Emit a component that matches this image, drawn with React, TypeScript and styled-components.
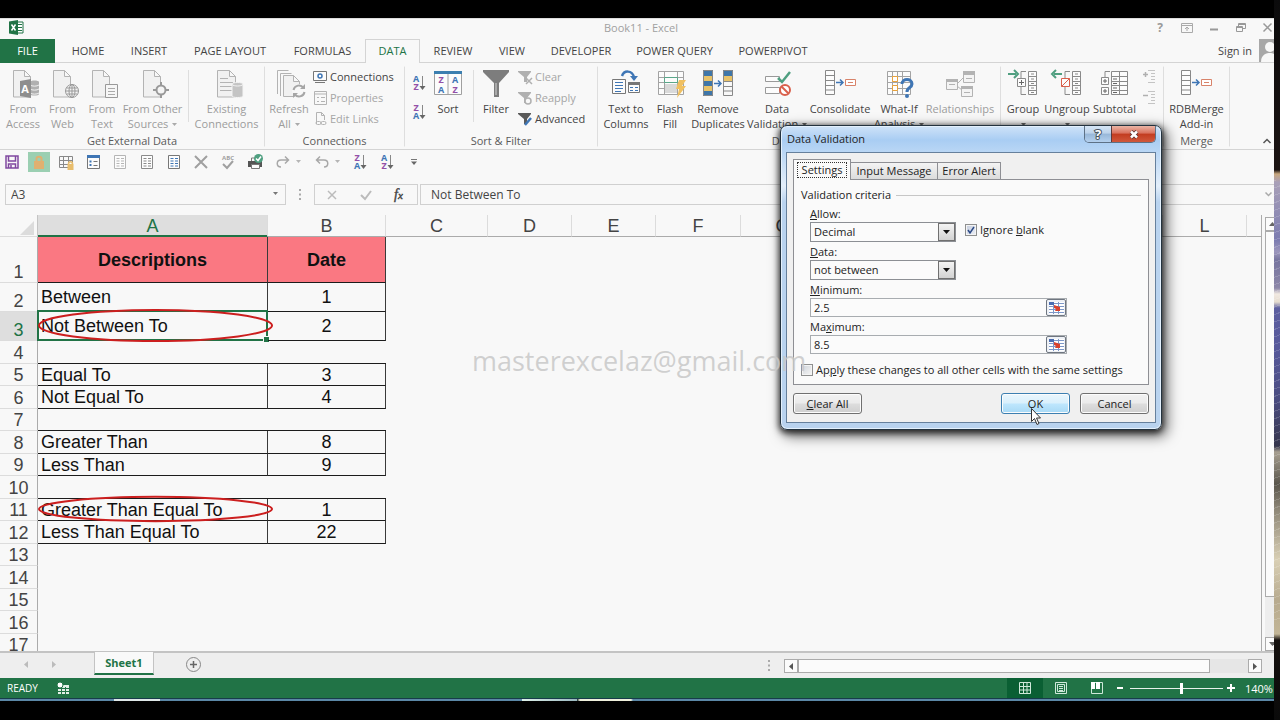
import React from "react";
import styled, { createGlobalStyle, css } from "styled-components";

const ui = `"Open Sans", "Noto Sans", sans-serif`;
const green = "#217346";
const line = "#d4d4d4";

const GlobalStyle = createGlobalStyle`
  *, *::before, *::after { box-sizing: border-box; }
  html, body, #root { height: 100%; }
  body { margin: 0; background: #000; overflow: hidden; font-family: ${ui}; }
  button, input, select { font: inherit; color: inherit; margin: 0; padding: 0; }
  button { border: 0; background: none; white-space: nowrap; }
  svg { display: block; overflow: visible; flex: none; }
`;

/* ---------- window shell ---------- */

const Screen = styled.div`
  display: flex;
  height: 100vh;
  background: #000;
`;

const Desktop = styled.div`
  flex: 1;
  min-width: 0;
  display: flex;
  flex-direction: column;
  padding: 18px 0 19px;
`;

const Wallpaper = styled.div`
  width: 6px;
  background:
    repeating-linear-gradient(160deg, rgba(255, 255, 255, 0.16) 0 1px, transparent 1px 7px) 0 180px / 6px 440px no-repeat,
    linear-gradient(
      #0b0b0c 0, #1c1413 170px, #c8a67c 174px, #a9a0b8 182px, #7b7bb0 240px,
      #9c96bc 252px, #77759f 260px, #8c86a8 288px, #f1e9e2 294px, #e5dccf 302px, #5d5fa0 308px,
      #56589a 350px, #4a4c80 400px, #35354c 446px, #a79f90 452px, #5a564c 484px, #8f8878 510px,
      #d9cfb4 560px, #b7aa8e 600px, #c2b596 634px, #15110f 640px, #0a0a0a 720px
    );
`;

const AppWindow = styled.div`
  position: relative;
  flex: 1;
  min-height: 0;
  display: flex;
  flex-direction: column;
  overflow: hidden;
  background: #f8f8f8;
  color: #444;
  border-top: 1px solid #dcdcdc;
`;

const TitleBar = styled.header`
  position: relative;
  display: flex;
  justify-content: space-between;
  align-items: flex-start;
  height: 20px;
`;

const TitleText = styled.div`
  padding-left: 8px;
  flex: 1;
  text-align: center;
  font-size: 11px;
  line-height: 18px;
  color: #a0a0a0;
`;

const TitleSide = styled.div<{ $end?: boolean }>`
  width: 120px;
  height: 17px;
  display: flex;
  align-items: center;
  justify-content: ${(p) => (p.$end ? "flex-end" : "flex-start")};
  padding-left: ${(p) => (p.$end ? 0 : 8)}px;
  color: #9a9a9a;
`;

const WindowButton = styled.button`
  width: 27px;
  height: 16px;
  flex: none;
  display: flex;
  align-items: center;
  justify-content: center;
  &:last-child { width: 20px; padding-left: 6px; }
`;

const TabBar = styled.nav`
  display: flex;
  height: 24px;
  border-bottom: 1px solid ${line};
`;

const RibbonTab = styled.button<{ $w: number; $kind?: "file" | "active" }>`
  width: ${(p) => p.$w}px;
  height: 24px;
  font-size: 11px;
  line-height: 24px;
  display: flex;
  justify-content: center;
  ${(p) =>
    p.$kind === "file" &&
    css`
      background: ${green};
      color: #fff;
      margin-right: 3px;
    `}
  ${(p) =>
    p.$kind === "active" &&
    css`
      color: ${green};
      background: #f8f8f8;
      border: 1px solid ${line};
      border-bottom: 0;
      line-height: 22px;
    `}
`;

const Account = styled.div`
  margin-left: auto;
  display: flex;
  gap: 7px;
  font-size: 11px;
  line-height: 24px;
  a { color: inherit; text-decoration: none; }
`;

const Avatar = styled.div`
  width: 15px;
  height: 23px;
  overflow: hidden;
  background: #a8a8a8;
`;

/* ---------- ribbon ---------- */

const Ribbon = styled.div`
  display: flex;
  height: 87px;
  border-bottom: 1px solid ${line};
`;

const Group = styled.section`
  display: flex;
  flex-direction: column;
  padding: 7px 0 0;
  border-right: 1px solid transparent;
  border-image: linear-gradient(#f8f8f8 4px, #dedede 5px, #dedede 82px, #f8f8f8 83px) 1;
`;

const GroupBody = styled.div<{ $l?: number; $r?: number }>`
  display: flex;
  height: 63px;
  padding-left: ${(p) => p.$l ?? 0}px;
  padding-right: ${(p) => p.$r ?? 0}px;
`;

const GroupLabel = styled.div`
  text-align: center;
  font-size: 11px;
  line-height: 17px;
  color: #5a5a5a;
  white-space: nowrap;
`;

const BigButton = styled.button<{ $w: number; $off?: boolean }>`
  width: ${(p) => p.$w}px;
  display: flex;
  flex-direction: column;
  align-items: center;
  font-size: 11px;
  line-height: 15px;
  color: ${(p) => (p.$off ? "#9c9c9c" : "#444")};
  svg { margin-bottom: 3px; }
`;

const ShortRule = styled.div<{ $gap: number }>`
  width: 1px;
  height: 52px;
  margin-left: ${(p) => p.$gap}px;
  background: #dedede;
`;

const SmallList = styled.div<{ $w: number }>`
  width: ${(p) => p.$w}px;
  display: flex;
  flex-direction: column;
  margin-top: -4px;
`;

const SmallButton = styled.button<{ $off?: boolean }>`
  display: flex;
  align-items: center;
  gap: 3px;
  height: 21px;
  font-size: 11px;
  color: ${(p) => (p.$off ? "#a6a6a6" : "#444")};
`;

const IconStack = styled.div<{ $w: number; $gap: number }>`
  width: ${(p) => p.$w}px;
  display: flex;
  flex-direction: column;
  align-items: center;
  gap: ${(p) => p.$gap}px;
`;

const Collapse = styled.button`
  margin: auto 0 3px auto;
  width: 12px;
  height: 10px;
`;

/* ---------- quick access + formula bar ---------- */

const QuickBar = styled.div`
  display: flex;
  align-items: center;
  gap: 5px;
  height: 24px;
  padding-left: 1px;
  margin-bottom: 10px;
`;

const QuickButton = styled.button<{ $w?: number; $on?: boolean }>`
  width: ${(p) => p.$w ?? 22}px;
  height: 20px;
  display: flex;
  align-items: center;
  justify-content: center;
  gap: 5px;
  background: ${(p) => (p.$on ? "#9bcfb2" : "none")};
`;

const FormulaBar = styled.div`
  display: flex;
  height: 21px;
  padding-left: 5px;
  margin-bottom: 10px;
  font-size: 12px;
`;

const Box = styled.div<{ $w?: number }>`
  ${(p) => (p.$w ? `width: ${p.$w}px;` : "flex: 1;")}
  border: 1px solid #d0d0d0;
  border-right-width: ${(p) => (p.$w ? 1 : 0)}px;
  display: flex;
  align-items: center;
  min-width: 0;
`;

const BoxInput = styled.input<{ $pad: number }>`
  flex: 1;
  min-width: 0;
  height: 19px;
  border: 0;
  outline: 0;
  background: none;
  && { padding-left: ${(p) => p.$pad}px; }
`;

const BoxButton = styled.button`
  flex: 1;
  display: flex;
  justify-content: center;
`;

const CaretButton = styled.button<{ $w: number }>`
  width: ${(p) => p.$w}px;
  display: flex;
  justify-content: center;
`;

const Dots = styled.div<{ $w: number }>`
  width: ${(p) => p.$w}px;
  display: flex;
  justify-content: center;
  align-items: center;
`;

/* ---------- sheet ---------- */

const SheetArea = styled.main`
  flex: 1;
  min-height: 0;
  display: flex;
`;

const GridPane = styled.div`
  flex: 1;
  min-width: 0;
  overflow: hidden;
  border-right: 1px solid #ababab;
`;

const Grid = styled.table`
  width: 100%;
  table-layout: fixed;
  border-collapse: separate;
  border-spacing: 0;
  font-family: "Liberation Sans", Arial, sans-serif;
  font-size: 18px;
  line-height: 20px;
  color: #111;
  th, td { padding: 0; }
`;

const ColHead = styled.th<{ $on?: boolean; $last?: boolean }>`
  height: 22px;
  font-weight: 400;
  color: ${(p) => (p.$on ? green : "#444")};
  background: ${(p) => (p.$on ? "#dedede" : "none")};
  border-bottom: 1px solid ${(p) => (p.$on ? green : "#ababab")};
  box-shadow: ${(p) => (p.$on ? `inset 0 -1px 0 ${green}` : "none")};
  border-right: ${(p) => (p.$last ? "0" : "1px solid #dcdcdc")};
`;

const Corner = styled.td`
  border-right: 1px solid #c4c4c4;
  border-bottom: 1px solid #dcdcdc;
  svg { margin: 4px 3px 0 auto; }
`;

const RowHead = styled.th<{ $on?: boolean }>`
  font-weight: 400;
  vertical-align: bottom;
  text-align: center;
  color: ${(p) => (p.$on ? green : "#444")};
  background: ${(p) => (p.$on ? "#dedede" : "none")};
  border-right: 1px solid #ababab;
  border-bottom: 1px solid #dcdcdc;
`;

const Cell = styled.td<{ $head?: boolean; $edge?: boolean; $mid?: boolean }>`
  position: relative;
  white-space: nowrap;
  vertical-align: middle;
  text-align: ${(p) => (p.$mid || p.$head ? "center" : "left")};
  font-weight: ${(p) => (p.$head ? 700 : 400)};
  background: ${(p) => (p.$head ? "#fa7882" : "none")};
  border-bottom: 1px solid #1c1c1c;
  border-right: ${(p) => (p.$edge ? "1px solid #3a3a3a" : "0")};
  && { padding-left: ${(p) => (p.$mid || p.$head ? 0 : 3)}px; }
`;

const Selection = styled.span`
  position: absolute;
  inset: -2px -1px -1px -1px;
  border: 2px solid ${green};
  &::after {
    content: "";
    position: absolute;
    right: -3px;
    bottom: -3px;
    width: 5px;
    height: 5px;
    background: ${green};
    box-shadow: 0 0 0 1px #f8f8f8;
  }
`;

const Ring = styled.svg`
  position: absolute;
  left: 0;
  top: -3px;
  width: calc(100% + 6px);
  height: calc(100% + 5px);
  z-index: 1;
`;

const VScroll = styled.div`
  width: 9px;
  margin: 2px 0 0 3px;
  display: flex;
  flex-direction: column;
  overflow: hidden;
  background: #ededed;
`;

const VArrow = styled.button`
  height: 14px;
  width: 15px;
  border: 1px solid #ababab;
  background: #fbfbfb;
  display: flex;
  align-items: center;
  justify-content: center;
`;

const VThumb = styled.div`
  width: 15px;
  flex: 0 1 366px;
  border: 1px solid #ababab;
  background: #fbfbfb;
  margin-bottom: auto;
`;

const SheetTabs = styled.div`
  display: flex;
  height: 27px;
  background: #eee;
  border-top: 2px solid #c3c3c3;
`;

const NavArrows = styled.div`
  width: 94px;
  display: flex;
  align-items: center;
  padding: 0 0 3px 24px;
  gap: 19px;
`;

const NavButton = styled.button`
  width: 8px;
`;

const SheetTab = styled.button`
  width: 60px;
  height: 23px;
  margin-top: -1px;
  background: #f9f9f9;
  border-left: 1px solid #c3c3c3;
  border-right: 1px solid #c3c3c3;
  border-bottom: 2px solid ${green};
  color: ${green};
  font-weight: 700;
  font-size: 11px;
  line-height: 21px;
`;

const AddSheet = styled.button`
  width: 78px;
  height: 22px;
  display: flex;
  align-items: center;
  justify-content: center;
`;

const HScroll = styled.div`
  margin: 6px 12px 0 8px;
  width: 478px;
  height: 14px;
  display: flex;
  background: #e6e6e6;
`;

const HArrow = styled.button`
  width: 14px;
  border: 1px solid #ababab;
  background: #fbfbfb;
  display: flex;
  align-items: center;
  justify-content: center;
`;

const HThumb = styled.div`
  width: 412px;
  margin-right: auto;
  border: 1px solid #ababab;
  background: #fbfbfb;
`;

const Spacer = styled.div`
  flex: 1;
`;

const StatusBar = styled.footer`
  display: flex;
  align-items: center;
  height: 20px;
  background: ${green};
  color: #fff;
  font-size: 10px;
  padding-left: 7px;
`;

const StatusText = styled.span`
  width: 50px;
`;

const ViewButton = styled.button<{ $on?: boolean }>`
  width: 36px;
  height: 20px;
  display: flex;
  align-items: center;
  justify-content: center;
  background: ${(p) => (p.$on ? "#0a5f33" : "none")};
`;

const Zoom = styled.div`
  width: 124px;
  display: flex;
  align-items: center;
  gap: 4px;
  padding-left: 2px;
`;

const ZoomButton = styled.button`
  width: 9px;
`;

const ZoomRange = styled.input`
  appearance: none;
  width: 93px;
  height: 12px;
  background: linear-gradient(#e6f0ea, #e6f0ea) center / 100% 1px no-repeat;
  &::-webkit-slider-thumb {
    appearance: none;
    width: 3px;
    height: 11px;
    background: #fff;
  }
`;

const ZoomValue = styled.span`
  width: 29px;
  font-size: 11px;
  white-space: nowrap;
`;

const Taskbar = styled.div`
  height: 3px;
  background:
    linear-gradient(90deg, transparent 114px, #dfe8e8 114px, #dfe8e8 160px, transparent 160px,
      transparent 522px, #dff2ea 522px, #9ab8c0 577px, #122 577px, #eef0dc 580px, #eef0dc 631px, transparent 633px)
      0 1px / 100% 2px no-repeat,
    linear-gradient(#173c4a 0, #173c4a 1px, #5b87a6 1px, #5b87a6 3px);
`;

/* ---------- dialog ---------- */

const Watermark = styled.div`
  position: absolute;
  left: 472px;
  top: 322px;
  font-size: 27px;
  line-height: 40px;
  color: rgba(200, 200, 200, 0.85);
  white-space: nowrap;
  pointer-events: none;
  z-index: 3;
`;

const Dialog = styled.section`
  position: absolute;
  left: 780px;
  top: 106px;
  width: 382px;
  z-index: 2;
  padding: 0 5px 6px;
  border: 1px solid #24333f;
  border-radius: 7px;
  background: linear-gradient(#cfe3f8 0, #a9cdf3 14px, #bcd8f5 28px, #e3eefa 60px, #b9d3ef 76px, #b9d3ef 100%);
  box-shadow: inset 0 0 0 1px #e4f1fd, 0 2px 6px 1px rgba(0, 0, 0, 0.75), 4px 5px 13px 2px rgba(0, 0, 0, 0.5);
  color: #222;
  font-size: 11px;
  line-height: 16px;
`;

const DialogTitle = styled.div`
  display: flex;
  justify-content: space-between;
  height: 26px;
  h2 {
    margin: 0;
    padding-left: 1px;
    font-size: 11px;
    font-weight: 400;
    line-height: 26px;
    color: #222;
  }
`;

const Caption = styled.div`
  display: flex;
  height: 17px;
  border: 1px solid #5d7186;
  border-top: 0;
  border-radius: 0 0 5px 5px;
  overflow: hidden;
`;

const CaptionButton = styled.button<{ $close?: boolean }>`
  width: ${(p) => (p.$close ? 44 : 26)}px;
  display: flex;
  align-items: center;
  justify-content: center;
  border-left: ${(p) => (p.$close ? "1px solid #5d3a3a" : "0")};
  background: ${(p) =>
    p.$close
      ? "linear-gradient(#eab5a6 0, #d9705c 45%, #c23c20 50%, #d0583c 100%)"
      : "linear-gradient(#d6e6f6 0, #bcd2ea 45%, #98b7d8 50%, #b4d0ee 100%)"};
`;

const DialogBody = styled.div`
  border: 1px solid #66809c;
  background: #f0f0f0;
  padding: 6px 6px 8px;
`;

const DialogTabs = styled.div`
  display: flex;
  align-items: flex-end;
  height: 21px;
  position: relative;
  margin-bottom: -1px;
`;

const DialogTab = styled.button<{ $w: number; $on?: boolean }>`
  width: ${(p) => p.$w}px;
  height: ${(p) => (p.$on ? 21 : 18)}px;
  display: flex;
  align-items: center;
  justify-content: center;
  border: 1px solid #8e8f94;
  border-left-width: ${(p) => (p.$on ? 1 : 0)}px;
  background: linear-gradient(#f4f4f4, #dcdcdc);
  ${(p) =>
    p.$on &&
    css`
      background: #fafafa;
      border-bottom: 0;
      padding: 2px 3px 3px;
      span {
        flex: 1;
        line-height: 14px;
        border: 1px dotted #333;
      }
    `}
`;

const DialogPanel = styled.div`
  border: 1px solid #8e8f94;
  background: #fafafa;
  padding: 7px 7px 6px;
`;

const Legend = styled.div`
  display: flex;
  align-items: center;
  gap: 5px;
  &::after {
    content: "";
    flex: 1;
    border-top: 1px solid #c6c6c6;
  }
`;

const Fields = styled.div`
  padding: 3px 0 8px 9px;
  display: flex;
  flex-direction: column;
  gap: 2px;
`;

const FieldLabel = styled.label`
  display: block;
`;

const FieldRow = styled.div`
  display: flex;
  gap: 9px;
`;

const SelectWrap = styled.div`
  display: grid;
  width: 146px;
  height: 20px;
  border: 1px solid #8c8f94;
  background: #fbfbfb;
  > * { grid-area: 1 / 1; }
  select {
    appearance: none;
    border: 0;
    outline: 0;
    background: none;
    padding: 0 18px 0 3px;
  }
`;

const DropMark = styled.span`
  justify-self: end;
  width: 17px;
  height: 18px;
  border: 1px solid #707070;
  background: linear-gradient(#f4f4f4, #d2d2d2);
  display: flex;
  align-items: center;
  justify-content: center;
  pointer-events: none;
`;

const RefBox = styled.div`
  display: flex;
  width: 257px;
  height: 19px;
  border: 1px solid #a8acb0;
  background: #fbfbfb;
  input {
    flex: 1;
    min-width: 0;
    border: 0;
    outline: 0;
    background: none;
    padding-left: 3px;
  }
`;

const RefButton = styled.button`
  width: 20px;
  border: 1px solid #6f7680;
  border-radius: 2px;
  background: #eef1f6;
  display: flex;
  align-items: center;
  justify-content: center;
`;

const Check = styled.label`
  display: flex;
  align-items: center;
  gap: 3px;
  height: 16px;
  white-space: nowrap;
  input {
    appearance: none;
    width: 12px;
    height: 12px;
    border: 1px solid #8e8f8f;
    background: linear-gradient(135deg, #cfd3d8, #f6f6f6);
    box-shadow: inset 0 0 0 1px #f4f4f4;
  }
  input:checked {
    background: linear-gradient(135deg, #c3cbdc, #eef1f8);
  }
`;

const CheckMark = styled.span`
  display: grid;
  > * { grid-area: 1 / 1; }
  svg { pointer-events: none; place-self: center; }
`;

const DialogActions = styled.div`
  display: flex;
  gap: 10px;
  margin-top: 8px;
  > :first-child { margin-right: auto; }
`;

const PushButton = styled.button<{ $hot?: boolean }>`
  width: 69px;
  height: 21px;
  line-height: 17px;
  border: 1px solid ${(p) => (p.$hot ? "#3c7fb1" : "#707070")};
  border-radius: 3px;
  box-shadow: inset 0 0 0 1px #fcfcfc;
  background: ${(p) =>
    p.$hot
      ? "linear-gradient(#eaf6fd 0, #d9f0fc 48%, #bee6fd 52%, #a7d9f5 100%)"
      : "linear-gradient(#f2f2f2 0, #ebebeb 48%, #dddddd 52%, #cfcfcf 100%)"};
`;

const Pointer = styled.svg`
  position: absolute;
  left: 1031px;
  top: 389px;
  width: 12px;
  height: 18px;
  z-index: 4;
`;

/* ---------- icons ---------- */

type Kids = { children?: React.ReactNode };

const Big = ({ children }: Kids) => (
  <svg width="34" height="28" viewBox="0 0 34 28" fill="none" stroke="#777" aria-hidden="true">
    {children}
  </svg>
);

const Sm = ({ w = 14, h = 14, children }: Kids & { w?: number; h?: number }) => (
  <svg width={w} height={h} viewBox={`0 0 ${w} ${h}`} fill="none" stroke="#777" aria-hidden="true">
    {children}
  </svg>
);

const Page = ({ x = 7, w = 17 }: { x?: number; w?: number }) => (
  <path
    d={`M${x + 0.5} .5h${w - 6}l6 6v20.500h-${w}zM${x + w - 5.5} .5v6h6`}
    stroke="#b3b3b3"
    fill="#f1f1f1"
  />
);

const Letter = ({ x, y, c, s = 9, children }: Kids & { x: number; y: number; c: string; s?: number }) => (
  <text x={x} y={y} fontSize={s} fontWeight="700" fontFamily={ui} fill={c} stroke="none" textAnchor="middle">
    {children}
  </text>
);

const blue = "#3f76b5";
const purple = "#9350a8";

const SortGlyph = ({ down }: { down?: boolean }) => (
  <Sm w={14} h={16}>
    <Letter x={4} y={7} c={down ? purple : blue}>{down ? "Z" : "A"}</Letter>
    <Letter x={4} y={15} c={down ? blue : purple}>{down ? "A" : "Z"}</Letter>
    <path d="M10.500 1v12" stroke="#888" />
    <path d="M7.500 11h6l-3 4z" fill="#666" stroke="none" />
  </Sm>
);

const CaretMark = styled.svg`
  && { display: inline-block; margin: 0 0 2px 1px; }
`;

const Caret = ({ c = "#777", w = 5 }: { c?: string; w?: number }) => (
  <CaretMark width={w} height="3" viewBox="0 0 5 3" aria-hidden="true">
    <path d="M0 0h5L2.500 3z" fill={c} />
  </CaretMark>
);

const IcAccess = () => (
  <Big>
    <Page />
    <path d="M24 12c0-2 9-2 9 0v12c0 2-9 2-9 0z" fill="#b0b0b0" stroke="none" />
    <path d="M24 15c2 1.500 7 1.500 9 0M24 19c2 1.500 7 1.500 9 0M24 23c2 1.500 7 1.500 9 0" stroke="#f1f1f1" />
    <path d="M14 11l11-2v19l-11-2z" fill="#8e8e8e" stroke="none" />
    <Letter x={19} y={23} c="#fff" s={11}>A</Letter>
  </Big>
);
const IcWeb = () => (
  <Big>
    <Page />
    <circle cx="26" cy="21" r="6.500" fill="#f4f4f4" stroke="#999" />
    <ellipse cx="26" cy="21" rx="3" ry="6.500" stroke="#999" />
    <path d="M19.500 21h13M20.500 18h11M20.500 24h11M26 14.500v13" stroke="#999" />
  </Big>
);
const IcText = () => (
  <Big>
    <Page />
    <path d="M20.500 14.500h12v13h-12z" fill="#f6f6f6" stroke="#999" />
    <path d="M23 18.500h7M23 21.500h7M23 24.500h7" stroke="#aaa" />
  </Big>
);
const IcOther = () => (
  <Big>
    <Page />
    <circle cx="25" cy="20" r="4.500" fill="#f4f4f4" stroke="#999" strokeWidth="2" />
    <path d="M25 12v4M25 24v4M17 20h4M29 20h4" stroke="#999" strokeWidth="2" />
  </Big>
);
const IcExisting = () => (
  <Big>
    <Page w={18} />
    <path d="M10 8.500h8M10 12.500h13M10 16.500h12M10 20.500h12" stroke="#b3b3b3" />
    <path d="M22 14c0-2 11-2 11 0v12c0 2-11 2-11 0z" fill="#c4c4c4" stroke="#f4f4f4" />
    <path d="M22 14.500c2 2 9 2 11 0" stroke="#f4f4f4" />
  </Big>
);
const IcRefresh = () => (
  <Big>
    <path d="M5.500 24V.5h11M8.500 26V3.500h11" stroke="#b3b3b3" />
    <path d="M11.500 5.500h10l6 6v15h-16zM21.500 5.500v6h6" stroke="#b3b3b3" fill="#f1f1f1" />
    <circle cx="27" cy="21" r="7" fill="#f8f8f8" stroke="none" />
    <path d="M21.500 20a5.500 5.500 0 0 1 10-2M32.500 22a5.500 5.500 0 0 1-10 2" stroke="#a6a6a6" strokeWidth="2" />
    <path d="M33 14v5h-5zM21 28v-5h5z" fill="#a6a6a6" stroke="none" />
  </Big>
);
const IcSort = () => (
  <Big>
    <path d="M3.500 1.500h27v23h-27z" fill="#fcfcfc" stroke="#a0a0a0" />
    <path d="M3 1h28v3H3z" fill="#3c7fb0" stroke="none" />
    <path d="M17 4v21" stroke="#a0a0a0" />
    <Letter x={10} y={13} c={purple}>Z</Letter>
    <Letter x={10} y={23} c={blue}>A</Letter>
    <Letter x={24} y={13} c={blue}>A</Letter>
    <Letter x={24} y={23} c={purple}>Z</Letter>
  </Big>
);
const IcFilter = () => (
  <Big>
    <path d="M4 0h26v2L20 13v14h-5V13L4 2z" fill="#7d7d7d" stroke="none" />
    <path d="M17 13v12" stroke="#d8d8d8" />
  </Big>
);
const IcColumns = () => (
  <Big>
    <path d="M3.500 9.500h13v14h-13z" fill="#fcfcfc" />
    <path d="M6 12.500h8M6 15.500h8M6 18.500h8M6 21.500h6" stroke={blue} />
    <path d="M19.500 12.500h11v10h-11z" fill="#fcfcfc" />
    <path d="M19 12h12v3H19z" fill="#777" stroke="none" />
    <path d="M21 17.500h3M26 17.500h3M21 20.500h3M26 20.500h3" stroke={blue} />
    <path d="M13 6c2-6 10-6 12 1" stroke={blue} strokeWidth="2.500" />
    <path d="M21 6h8l-4 5z" fill={blue} stroke="none" />
  </Big>
);
const IcFlash = () => (
  <Big>
    <path d="M5.500 1.500h25v23h-25zM5 7.500h25M5 12.500h25M5 18.500h25M11.500 1v24M24.500 1v24" fill="#fcfcfc" stroke="#a3a3a3" />
    <path d="M12 14h12v9H12z" fill="#d9d9d9" stroke="none" />
    <path d="M11.500 7.500h13v5h-13z" stroke="#5aa78a" />
    <path d="M26 10h7l-4 6h4L24 28l2-9h-3z" fill="#f0c060" stroke="none" />
  </Big>
);
const IcDupes = () => (
  <Big>
    <path d="M2 0h10v26H2zM22 0h10v6H22z" fill="#3f76a8" stroke="none" />
    <path d="M2 6h10v5H2zM2 16h10v5H2zM22 6h10v5H22z" fill="#e8c268" stroke="none" />
    <path d="M22.500 .5h9v25h-9zM22.500 11.500h9M22.500 16.500h9M22.500 21h9M2.500 .5h9v25h-9z" stroke="#888" />
    <path d="M13 13.500h6M17 10.500l3 3-3 3" stroke={blue} strokeWidth="1.500" />
  </Big>
);
const IcValid = () => (
  <Big>
    <path d="M5.500 6.500h14v5h-14zM5.500 17.500h14v6h-14z" fill="#fcfcfc" stroke="#999" />
    <path d="M18 8l4 4 8-10" stroke="#4f9f80" strokeWidth="2.500" />
    <circle cx="25" cy="20" r="5" fill="#fff" stroke="#d9604c" strokeWidth="2" />
    <path d="M21.500 16.500l7 7" stroke="#d9604c" strokeWidth="2" />
  </Big>
);
const IcConsolidate = () => (
  <Big>
    <path d="M2.500 .5h9v24h-9zM2.500 5.500h9M2.500 10.500h9M2.500 15.500h9M2.500 20h9" fill="#fcfcfc" stroke="#888" />
    <path d="M13 12.500h6M17 9.500l3 3-3 3" stroke={blue} strokeWidth="1.500" />
    <path d="M22.500 9.500h10v6h-10zM25 12.500h5" fill="#fff" stroke="#d8836a" />
  </Big>
);
const IcWhatIf = () => (
  <Big>
    <path d="M5.500 1.500h23v23h-23zM10.500 1v24M15.500 1v24M20.500 1v24M5 6.500h24M5 12.500h24M5 18.500h24" fill="#fcfcfc" stroke="#a3a3a3" />
    <path d="M10.500 6.500h5v5h-5zM10.500 15.500h5v5h-5z" fill="#fff" stroke="#e8a23c" />
    <path d="M20 14c0-6 10-6 10 0 0 4-5 3-5 8" stroke={blue} strokeWidth="3" />
    <circle cx="25" cy="26" r="2" fill={blue} stroke="none" />
  </Big>
);
const IcRelations = () => (
  <Big>
    <path d="M3.500 9.500h11v10h-11zM20.500 2.500h11v10h-11zM18.500 16.500h11v10h-11z" fill="#f4f4f4" stroke="#b3b3b3" />
    <path d="M3 9h12v3H3zM20 1h12v4H20zM18 16h12v3H18z" fill="#b3b3b3" stroke="none" />
    <path d="M14 14l6-6M14 16l5 4M6 14.500h6M23 8.500h6M21 22.500h6" stroke="#b3b3b3" />
  </Big>
);

const Rungs = ({ x }: { x: number }) => (
  <path
    d={`M${x}.5 1.500h8v23h-8zM${x} 6.500h8M${x} 11.500h8M${x} 15.500h8M${x} 20.500h8M${x + 3} 4h3M${x + 3} 9h3M${x + 3} 13.500h3M${x + 3} 18h3M${x + 3} 22.500h3`}
    fill="#fcfcfc"
    stroke="#8a8a8a"
  />
);
const IcGroup = () => (
  <Big>
    <Rungs x={22} />
    <path d="M20 1.500h-5v23h5" stroke="#8a8a8a" />
    <path d="M11.500 8.500h8v8h-8z" fill="#fcfcfc" stroke="#8a8a8a" />
    <path d="M13 12.500h5M15.500 10v5" stroke="#666" />
    <path d="M2 4h8M8 0l4 4-4 4" stroke="#4f9f80" strokeWidth="2" />
  </Big>
);
const IcUngroup = () => (
  <Big>
    <Rungs x={22} />
    <path d="M20 1.500h-5v23h5" stroke="#8a8a8a" />
    <path d="M11.500 8.500h8v8h-8zM11.500 16.500l8-8" fill="#fcfcfc" stroke="#d9604c" />
    <path d="M12 4H4M6 0L2 4l4 4" stroke="#4f9f80" strokeWidth="2" />
  </Big>
);
const IcSubtotal = () => (
  <Big>
    <path d="M13.500 1.500h16v23h-16zM13 6.500h16M13 11.500h16M13 15.500h16M13 20.500h16M21.500 1v24" fill="#fcfcfc" stroke="#8a8a8a" />
    <path d="M12 1.500H7V8" stroke="#8a8a8a" />
    <path d="M3.500 7.500h7v7h-7zM3.500 17.500h7v7h-7z" fill="#fcfcfc" stroke="#8a8a8a" />
    <path d="M5 11h4M7 9v4M5 21h4M7 19v4M15 9h4M15 13.500h4M15 18h4M15 22.500h4" stroke="#666" />
  </Big>
);
const IcMerge = () => (
  <Big>
    <path d="M1.500 .5h9v24h-9zM1.500 5.500h9M1.500 10.500h9M1.500 15.500h9M1.500 20h9" fill="#fcfcfc" stroke="#888" />
    <path d="M12 12.500h6M16 9.500l3 3-3 3" stroke={blue} strokeWidth="1.500" />
    <path d="M21.500 9.500h10v6h-10zM24 12.500h5" fill="#fff" stroke="#d8836a" />
  </Big>
);

const IcDetail = ({ minus }: { minus?: boolean }) => (
  <Sm w={14} h={13}>
    <path d={minus ? "M1 4.500h5" : "M1 4.500h5M3.500 2v5"} stroke="#b0b0b0" strokeWidth="1.500" />
    <path d="M6 .5h7M9 3.500h4M9 6.500h4M9 9.500h4M6 12.500h7" stroke="#c4c4c4" />
  </Sm>
);

const Funnel = ({ c }: { c: string }) => <path d="M0 1h13v1L9 7v5H6V7L0 2z" fill={c} stroke="none" />;

/* ---------- data ---------- */

const tabs: [string, number, ("file" | "active")?][] = [
  ["FILE", 55, "file"],
  ["HOME", 60],
  ["INSERT", 62],
  ["PAGE LAYOUT", 100],
  ["FORMULAS", 85],
  ["DATA", 55, "active"],
  ["REVIEW", 66],
  ["VIEW", 52],
  ["DEVELOPER", 86],
  ["POWER QUERY", 101],
  ["POWERPIVOT", 96],
];

const columns: [string, number][] = [
  ["A", 230], ["B", 118], ["C", 102], ["D", 84], ["E", 84], ["F", 85],
  ["G", 84], ["H", 85], ["I", 84], ["J", 85], ["K", 84], ["L", 84],
];

const rows: { h: number; a?: string; b?: string; ring?: boolean }[] = [
  { h: 46, a: "Descriptions", b: "Date" },
  { h: 29, a: "Between", b: "1" },
  { h: 29, a: "Not Between To", b: "2", ring: true },
  { h: 23 },
  { h: 22, a: "Equal To", b: "3" },
  { h: 23, a: "Not Equal To", b: "4" },
  { h: 22 },
  { h: 23, a: "Greater Than", b: "8" },
  { h: 22, a: "Less Than", b: "9" },
  { h: 23 },
  { h: 22, a: "Greater Than Equal To", b: "1", ring: true },
  { h: 23, a: "Less Than Equal To", b: "22" },
  { h: 22 }, { h: 23 }, { h: 22 }, { h: 23 }, { h: 22 },
];

type BigItem = [string, string, number, () => React.ReactElement, boolean?, boolean?];

const BigItems = ({ items, off }: { items: BigItem[]; off?: boolean }) => (
  <>
    {items.map(([l1, l2, w, Icon, caret, dim]) => (
      <BigButton key={l1 + l2} $w={w} $off={off || dim}>
        <Icon />
        <span>{l1}</span>
        <span>
          {l2}
          {caret && <> <Caret c={off ? "#aaa" : "#666"} /></>}
        </span>
      </BigButton>
    ))}
  </>
);

/* ---------- parts ---------- */

const RibbonBar = () => (
  <Ribbon>
    <Group>
      <GroupBody $l={3}>
        <BigItems
          off
          items={[
            ["From", "Access", 40, IcAccess],
            ["From", "Web", 39, IcWeb],
            ["From", "Text", 40, IcText],
            ["From Other", "Sources", 61, IcOther, true],
          ]}
        />
        <ShortRule $gap={5} />
        <BigItems off items={[["Existing", "Connections", 75, IcExisting]]} />
      </GroupBody>
      <GroupLabel>Get External Data</GroupLabel>
    </Group>
    <Group>
      <GroupBody>
        <BigItems off items={[["Refresh", "All", 48, IcRefresh, true]]} />
        <SmallList $w={91}>
          <SmallButton>
            <Sm>
              <path d="M.5 1.500h13v9h-13z" fill="#fcfcfc" />
              <circle cx="7" cy="6" r="2" stroke={blue} strokeWidth="1.500" />
              <path d="M2 12.500h10" />
            </Sm>
            Connections
          </SmallButton>
          <SmallButton $off>
            <Sm>
              <path d="M1.500 .5h12v13h-12zM1 3h13M4 6.500h2M8 6.500h4M4 10.500h2M8 10.500h4" stroke="#b3b3b3" />
            </Sm>
            Properties
          </SmallButton>
          <SmallButton $off>
            <Sm>
              <path d="M3.500 12V.5h5l3 3V8M8.500 .5v3h3" stroke="#b3b3b3" />
              <rect x="3" y="9.500" width="5" height="3" rx="1.500" stroke="#b3b3b3" />
              <rect x="8" y="9.500" width="5" height="3" rx="1.500" stroke="#b3b3b3" />
            </Sm>
            Edit Links
          </SmallButton>
        </SmallList>
      </GroupBody>
      <GroupLabel>Connections</GroupLabel>
    </Group>
    <Group>
      <GroupBody>
        <IconStack $w={28} $gap={13}>
          <button aria-label="Sort A to Z"><svg width="0" height="5" /><SortGlyph /></button>
          <button aria-label="Sort Z to A"><SortGlyph down /></button>
        </IconStack>
        <BigItems items={[["Sort", "", 30, IcSort]]} />
        <ShortRule $gap={10} />
        <BigItems items={[["Filter", "", 44, IcFilter]]} />
        <SmallList $w={79}>
          <SmallButton $off>
            <Sm>
              <Funnel c="#b0b0b0" />
              <path d="M8 8l6 6M14 8l-6 6" stroke="#b0b0b0" strokeWidth="1.500" />
            </Sm>
            Clear
          </SmallButton>
          <SmallButton $off>
            <Sm>
              <Funnel c="#b0b0b0" />
              <circle cx="10" cy="10" r="3" fill="#f8f8f8" stroke="#b0b0b0" strokeWidth="1.500" />
            </Sm>
            Reapply
          </SmallButton>
          <SmallButton>
            <Sm>
              <Funnel c="#5a5a5a" />
              <path d="M7 13l6-7" stroke={blue} strokeWidth="2.500" />
            </Sm>
            Advanced
          </SmallButton>
        </SmallList>
      </GroupBody>
      <GroupLabel>Sort &amp; Filter</GroupLabel>
    </Group>
    <Group>
      <GroupBody $r={2}>
        <BigItems
          items={[
            ["Text to", "Columns", 56, IcColumns],
            ["Flash", "Fill", 32, IcFlash],
            ["Remove", "Duplicates", 64, IcDupes],
            ["Data", "Validation", 54, IcValid, true],
            ["Consolidate", "", 72, IcConsolidate],
            ["What-If", "Analysis", 46, IcWhatIf, true],
            ["Relationships", "", 76, IcRelations, false, true],
          ]}
        />
      </GroupBody>
      <GroupLabel>Data Tools</GroupLabel>
    </Group>
    <Group>
      <GroupBody $r={5}>
        <BigItems
          items={[
            ["Group", "", 44, IcGroup, true],
            ["Ungroup", "", 44, IcUngroup, true],
            ["Subtotal", "", 51, IcSubtotal],
          ]}
        />
        <IconStack $w={18} $gap={8}>
          <button aria-label="Show Detail"><IcDetail /></button>
          <button aria-label="Hide Detail"><IcDetail minus /></button>
        </IconStack>
      </GroupBody>
      <GroupLabel>Outline</GroupLabel>
    </Group>
    <Group>
      <GroupBody>
        <BigItems items={[["RDBMerge", "Add-in", 65, IcMerge]]} />
      </GroupBody>
      <GroupLabel>Merge</GroupLabel>
    </Group>
    <Collapse aria-label="Collapse the Ribbon">
      <Sm w={10} h={8}>
        <path d="M1.500 6L5 2.500 8.500 6" stroke="#555" strokeWidth="1.500" />
      </Sm>
    </Collapse>
  </Ribbon>
);

const SheetIcon = ({ c, fill }: { c: string; fill?: string }) => (
  <Sm>
    <path d="M1.500 .5h11v13h-11z" fill="#fcfcfc" stroke={c} />
    <path d="M3.500 3.500h3M3.500 6h3M3.500 8.500h3M3.500 11h3M8 3.500h3M8 6h3M8 8.500h3M8 11h3" stroke={fill ?? c} />
  </Sm>
);

const QuickAccess = () => (
  <QuickBar>
    <QuickButton aria-label="Save">
      <Sm>
        <path d="M1 1h12v12H1z" stroke="#8048a0" strokeWidth="1.500" />
        <path d="M3.500 1v5h7V1M3.500 13V9h7v4M6 10v3" stroke="#8048a0" strokeWidth="1.500" />
      </Sm>
    </QuickButton>
    <QuickButton $on aria-label="Lock Cell">
      <Sm>
        <path d="M2 6h10v8H2z" fill="#e0b070" stroke="none" />
        <path d="M4.500 6V3.500c0-2.500 5-2.500 5 0V6" stroke="#e0b070" strokeWidth="2" />
      </Sm>
    </QuickButton>
    <QuickButton aria-label="Protect Sheet">
      <Sm w={15} h={15}>
        <path d="M.5 1.500h13v11H.5zM4.500 1v12M9.500 1v12M0 5.500h14M0 9.500h14" stroke="#888" />
        <path d="M8.500 9h6v6h-6z" fill="#e8bd6c" stroke="none" />
        <path d="M9.500 9c0-3 4-3 4 0" stroke="#e8bd6c" strokeWidth="1.500" />
      </Sm>
    </QuickButton>
    <QuickButton aria-label="Form">
      <Sm>
        <path d="M1.500 .5h12v13h-12z" fill="#fcfcfc" stroke="#777" />
        <path d="M1 0h13v3H1z" fill={blue} stroke="none" />
        <path d="M3.500 6.500h2M3.500 10h2" stroke={blue} strokeWidth="2" />
        <path d="M7.500 6.500h4M7.500 10.500h4" />
      </Sm>
    </QuickButton>
    <QuickButton aria-label="Ungroup sheet"><SheetIcon c="#b5b5b5" /></QuickButton>
    <QuickButton aria-label="Group sheet"><SheetIcon c="#8a8a8a" /></QuickButton>
    <QuickButton aria-label="Freeze"><SheetIcon c="#777" fill={blue} /></QuickButton>
    <QuickButton aria-label="Delete">
      <Sm><path d="M1 1l12 12M13 1L1 13" stroke="#a0a0a0" strokeWidth="2" /></Sm>
    </QuickButton>
    <QuickButton aria-label="Spelling">
      <Sm w={14} h={16}>
        <Letter x={7} y={6} c="#a0a0a0" s={6}>ABC</Letter>
        <path d="M2 10l4 4 6-7" stroke="#a0a0a0" strokeWidth="2" />
      </Sm>
    </QuickButton>
    <QuickButton aria-label="Quick Print">
      <Sm w={17} h={16}>
        <path d="M1 7h14v6H1z" fill="#555" stroke="none" />
        <path d="M4.500 10.500h8v4h-8zM4.500 7V4h3" fill="#fcfcfc" stroke="#777" />
        <circle cx="11.500" cy="4.500" r="4.500" fill="#4f9f80" stroke="none" />
        <path d="M9 4.500l2 2 3-4" stroke="#fff" strokeWidth="1.500" />
      </Sm>
    </QuickButton>
    <QuickButton $w={34} aria-label="Redo">
      <Sm w={14} h={12}>
        <path d="M12 4H5c-5 0-5 7 0 7M9 .5L12.500 4 9 7.500" stroke="#a8a8a8" strokeWidth="1.500" />
      </Sm>
      <Caret c="#b5b5b5" />
    </QuickButton>
    <QuickButton $w={34} aria-label="Undo">
      <Sm w={14} h={12}>
        <path d="M2 4h7c5 0 5 7 0 7M5 .5L1.500 4 5 7.500" stroke="#a8a8a8" strokeWidth="1.500" />
      </Sm>
      <Caret c="#b5b5b5" />
    </QuickButton>
    <QuickButton aria-label="Sort Descending"><SortGlyph down /></QuickButton>
    <QuickButton aria-label="Sort Ascending"><SortGlyph /></QuickButton>
    <QuickButton aria-label="Customize">
      <Sm w={6} h={6}>
        <path d="M0 .5h6" />
        <path d="M0 2.500h6L3 6z" fill="#666" stroke="none" />
      </Sm>
    </QuickButton>
  </QuickBar>
);

const dotsIcon = (
  <Sm w={2} h={12}>
    <path d="M0 1h2M0 5.500h2M0 10h2" stroke="#aaa" strokeWidth="2" />
  </Sm>
);

const Formula = () => (
  <FormulaBar>
    <Box $w={281}>
      <BoxInput $pad={5} aria-label="Name Box" defaultValue="A3" />
      <CaretButton $w={20} aria-label="Names"><Caret w={7} /></CaretButton>
    </Box>
    <Dots $w={28}>{dotsIcon}</Dots>
    <Box $w={104}>
      <BoxButton aria-label="Cancel entry">
        <Sm w={10} h={10}><path d="M1 1l8 8M9 1L1 9" stroke="#bbb" strokeWidth="1.500" /></Sm>
      </BoxButton>
      <BoxButton aria-label="Enter">
        <Sm w={12} h={10}><path d="M1 5l4 4 6-8" stroke="#bbb" strokeWidth="2" /></Sm>
      </BoxButton>
      <BoxButton aria-label="Insert Function">
        <Sm w={12} h={14}>
          <text x="0" y="11" fontSize="14" fontStyle="italic" fontFamily="Liberation Serif, serif" fill="#444" stroke="#444" strokeWidth=".4">
            f<tspan fontSize="11">x</tspan>
          </text>
        </Sm>
      </BoxButton>
    </Box>
    <Dots $w={2} />
    <Box>
      <BoxInput $pad={10} aria-label="Formula" defaultValue="Not Between To" />
      <CaretButton $w={12} aria-label="Expand Formula Bar">
        <Sm w={7} h={5}><path d="M.5 .5l3 3 3-3" stroke="#aaa" strokeWidth="1.500" /></Sm>
      </CaretButton>
    </Box>
  </FormulaBar>
);

const Sheet = () => (
  <SheetArea>
    <GridPane>
      <Grid>
        <colgroup>
          <col width={38} />
          {columns.map(([c, w]) => <col key={c} width={w} />)}
          <col />
        </colgroup>
        <thead>
          <tr>
            <Corner>
              <Sm w={14} h={14}><path d="M14 0v14H0z" fill="#dcdcdc" stroke="none" /></Sm>
            </Corner>
            {columns.map(([c]) => <ColHead key={c} scope="col" $on={c === "A"}>{c}</ColHead>)}
            <ColHead as="td" $last />
          </tr>
        </thead>
        <tbody>
          {rows.map((r, i) => (
            <tr key={i} style={{ height: r.h }}>
              <RowHead scope="row" $on={i === 2}>{i + 1}</RowHead>
              {i < 12 ? (
                <>
                  <Cell $head={i === 0} $edge={!!r.a}>
                    {r.a}
                    {i === 2 && <Selection />}
                    {r.ring && (
                      <Ring viewBox="0 0 236 32" preserveAspectRatio="none" aria-hidden="true">
                        <ellipse cx="118" cy="16" rx="117" ry="15" fill="none" stroke="#cc1f1f" strokeWidth="2" vectorEffect="non-scaling-stroke" />
                      </Ring>
                    )}
                  </Cell>
                  <Cell $head={i === 0} $mid $edge={!!r.a}>{r.b}</Cell>
                </>
              ) : (
                <td colSpan={2} />
              )}
              <td colSpan={11} />
            </tr>
          ))}
        </tbody>
      </Grid>
    </GridPane>
    <VScroll>
      <VArrow aria-label="Scroll up"><Sm w={7} h={4}><path d="M0 4h7L3.500 0z" fill="#666" stroke="none" /></Sm></VArrow>
      <VThumb />
      <VArrow aria-label="Scroll down"><Sm w={7} h={4}><path d="M0 0h7L3.500 4z" fill="#666" stroke="none" /></Sm></VArrow>
    </VScroll>
  </SheetArea>
);

const RefGlyph = () => (
  <Sm w={15} h={12}>
    <path d="M0 0h15v12H0z" fill="#fff" stroke="none" />
    <path d="M0 1.500h15M0 4.500h15M0 7.500h15M0 10.500h15M4.500 0v12M9.500 0v12" stroke="#7d97c8" />
    <path d="M0 0h5v3H0z" fill="#4a6cb0" stroke="none" />
    <path d="M5 3l3 1 3 1v4H6l1-2-2-1z" fill="#d8402c" stroke="none" />
  </Sm>
);

const DropArrow = () => (
  <DropMark>
    <Sm w={7} h={4}><path d="M0 0h7L3.500 4z" fill="#111" stroke="none" /></Sm>
  </DropMark>
);

const ValidationDialog = () => (
  <Dialog role="dialog" aria-labelledby="dlg-title">
    <DialogTitle>
      <h2 id="dlg-title">Data Validation</h2>
      <Caption>
        <CaptionButton aria-label="Help">
          <Sm w={10} h={13}>
            <text x="5" y="11" fontSize="13" fontWeight="700" fontFamily={ui} textAnchor="middle" fill="#fff" stroke="#4a5560" strokeWidth="2" paintOrder="stroke">?</text>
          </Sm>
        </CaptionButton>
        <CaptionButton $close aria-label="Close">
          <Sm w={10} h={9}>
            <path d="M2 1.500l6 6M8 1.500l-6 6" stroke="#5a3030" strokeWidth="4" />
            <path d="M2 1.500l6 6M8 1.500l-6 6" stroke="#fff" strokeWidth="2.500" />
          </Sm>
        </CaptionButton>
      </Caption>
    </DialogTitle>
    <DialogBody>
      <DialogTabs role="tablist">
        <DialogTab role="tab" $w={58} $on><span>Settings</span></DialogTab>
        <DialogTab role="tab" $w={87}>Input Message</DialogTab>
        <DialogTab role="tab" $w={63}>Error Alert</DialogTab>
      </DialogTabs>
      <DialogPanel>
        <Legend>Validation criteria</Legend>
        <Fields>
          <div>
            <FieldLabel htmlFor="allow"><u>A</u>llow:</FieldLabel>
            <FieldRow>
              <SelectWrap>
                <select id="allow" defaultValue="Decimal"><option>Decimal</option></select>
                <DropArrow />
              </SelectWrap>
              <Check>
                <CheckMark>
                  <input type="checkbox" defaultChecked />
                  <Sm w={8} h={8}><path d="M1 4l2 3 4-6" stroke="#2c4a86" strokeWidth="1.500" /></Sm>
                </CheckMark>
                <span>Ignore <u>b</u>lank</span>
              </Check>
            </FieldRow>
          </div>
          <div>
            <FieldLabel htmlFor="data"><u>D</u>ata:</FieldLabel>
            <SelectWrap>
              <select id="data" defaultValue="not between"><option>not between</option></select>
              <DropArrow />
            </SelectWrap>
          </div>
          <div>
            <FieldLabel htmlFor="min"><u>M</u>inimum:</FieldLabel>
            <RefBox>
              <input id="min" defaultValue="2.5" />
              <RefButton aria-label="Pick minimum"><RefGlyph /></RefButton>
            </RefBox>
          </div>
          <div>
            <FieldLabel htmlFor="max">Ma<u>x</u>imum:</FieldLabel>
            <RefBox>
              <input id="max" defaultValue="8.5" />
              <RefButton aria-label="Pick maximum"><RefGlyph /></RefButton>
            </RefBox>
          </div>
        </Fields>
        <Check>
          <input type="checkbox" />
          <span>Ap<u>p</u>ly these changes to all other cells with the same settings</span>
        </Check>
      </DialogPanel>
      <DialogActions>
        <PushButton><u>C</u>lear All</PushButton>
        <PushButton $hot>OK</PushButton>
        <PushButton>Cancel</PushButton>
      </DialogActions>
    </DialogBody>
  </Dialog>
);

export default function App() {
  return (
    <Screen>
      <GlobalStyle />
      <Desktop>
        <AppWindow>
          <TitleBar>
            <TitleSide>
              <Sm w={16} h={15}>
                <path d="M8 2h7v11H8z" fill="#fff" stroke={green} />
                <path d="M10 4.500h4M10 7.500h4M10 10.500h4" stroke={green} />
                <path d="M1 1.500L10 0v15l-9-1.500z" fill={green} stroke="none" />
                <path d="M3.500 4.500l4 6M7.500 4.500l-4 6" stroke="#fff" strokeWidth="1.500" />
              </Sm>
            </TitleSide>
            <TitleText>Book11 - Excel</TitleText>
            <TitleSide $end>
              <WindowButton aria-label="Help">
                <Sm w={8} h={12}><Letter x={4} y={10} c="#9a9a9a" s={12}>?</Letter></Sm>
              </WindowButton>
              <WindowButton aria-label="Ribbon Display Options">
                <Sm w={12} h={10}><path d="M.5 .5h11v9H.5zM0 2.500h12M6 8V4.500M4 6l2-2 2 2" stroke="#aaa" /></Sm>
              </WindowButton>
              <WindowButton aria-label="Minimize">
                <Sm w={8} h={10}><path d="M0 6.500h8" stroke="#999" strokeWidth="2" /></Sm>
              </WindowButton>
              <WindowButton aria-label="Restore">
                <Sm w={10} h={9}><path d="M.5 3.500h6v5h-6zM2.500 3V.5h7v5H7M0 4.500h7M2 1.500h8" stroke="#999" /></Sm>
              </WindowButton>
              <WindowButton aria-label="Close">
                <Sm w={9} h={9}><path d="M.5 .5l8 8M8.500 .5l-8 8" stroke="#999" strokeWidth="1.500" /></Sm>
              </WindowButton>
            </TitleSide>
          </TitleBar>
          <TabBar>
            {tabs.map(([t, w, kind]) => <RibbonTab key={t} $w={w} $kind={kind}>{t}</RibbonTab>)}
            <Account>
              <a href="#signin">Sign in</a>
              <Avatar>
                <Sm w={15} h={23}>
                  <circle cx="11" cy="8" r="5" fill="#f8f8f8" stroke="none" />
                  <path d="M2 23c0-8 6-9 9-9s6 1 9 9z" fill="#f8f8f8" stroke="none" />
                </Sm>
              </Avatar>
            </Account>
          </TabBar>
          <RibbonBar />
          <QuickAccess />
          <Formula />
          <Sheet />
          <SheetTabs>
            <NavArrows>
              <NavButton aria-label="Previous sheet"><Sm w={5} h={7}><path d="M4 0v7L0 3.500z" fill="#bbb" stroke="none" /></Sm></NavButton>
              <NavButton aria-label="Next sheet"><Sm w={5} h={7}><path d="M1 0v7l4-3.500z" fill="#bbb" stroke="none" /></Sm></NavButton>
            </NavArrows>
            <SheetTab>Sheet1</SheetTab>
            <AddSheet aria-label="New sheet">
              <Sm w={15} h={15}>
                <circle cx="7.500" cy="7.500" r="7" stroke="#888" />
                <path d="M7.500 4v7M4 7.500h7" stroke="#666" strokeWidth="1.500" />
              </Sm>
            </AddSheet>
            <Spacer />
            <Dots $w={14}>{dotsIcon}</Dots>
            <HScroll>
              <HArrow aria-label="Scroll left"><Sm w={4} h={7}><path d="M4 0v7L0 3.500z" fill="#555" stroke="none" /></Sm></HArrow>
              <HThumb />
              <HArrow aria-label="Scroll right"><Sm w={4} h={7}><path d="M0 0v7l4-3.500z" fill="#555" stroke="none" /></Sm></HArrow>
            </HScroll>
          </SheetTabs>
          <StatusBar>
            <StatusText>READY</StatusText>
            <button aria-label="Record Macro">
              <Sm w={12} h={12}>
                <path d="M1 3h11v9H1z" fill="#e2efe7" stroke="none" />
                <path d="M1 6.500h11M1 9.500h11M4.500 5v7M8.500 5v7" stroke={green} />
                <circle cx="3" cy="3" r="3" fill="#fff" stroke={green} />
              </Sm>
            </button>
            <Spacer />
            <ViewButton $on aria-label="Normal">
              <Sm w={12} h={12}><path d="M.5 .5h11v11H.5zM4.500 0v12M8 0v12M0 4.500h12M0 8h12" stroke="#cfe8da" /></Sm>
            </ViewButton>
            <ViewButton aria-label="Page Layout">
              <Sm w={12} h={12}><path d="M.5 .5h11v11H.5zM2.500 2.500h7v7h-7zM4 4.500h4M4 6.500h4M4 8.500h4" stroke="#cfe8da" /></Sm>
            </ViewButton>
            <ViewButton aria-label="Page Break Preview">
              <Sm w={12} h={12}>
                <path d="M.5 .5h11v11H.5z" stroke="#cfe8da" />
                <path d="M0 0h4v7H0zM5 0h4v7H5z" fill="#fff" stroke="none" />
              </Sm>
            </ViewButton>
            <Zoom>
              <ZoomButton aria-label="Zoom out"><Sm w={6} h={6}><path d="M0 3h6" stroke="#fff" strokeWidth="2" /></Sm></ZoomButton>
              <ZoomRange type="range" min={10} max={272} defaultValue={156} aria-label="Zoom" />
              <ZoomButton aria-label="Zoom in"><Sm w={8} h={8}><path d="M0 4h8M4 0v8" stroke="#fff" strokeWidth="2" /></Sm></ZoomButton>
            </Zoom>
            <Dots $w={6} />
            <ZoomValue>140%</ZoomValue>
          </StatusBar>
          <Taskbar />
          <ValidationDialog />
          <Watermark>masterexcelaz@gmail.com</Watermark>
          <Pointer viewBox="0 0 12 18" aria-hidden="true">
            <path d="M.5 .5v13l3-3 2.500 6 2-1-2.500-5.500h4z" fill="#fff" stroke="#333" />
          </Pointer>
        </AppWindow>
      </Desktop>
      <Wallpaper />
    </Screen>
  );
}
